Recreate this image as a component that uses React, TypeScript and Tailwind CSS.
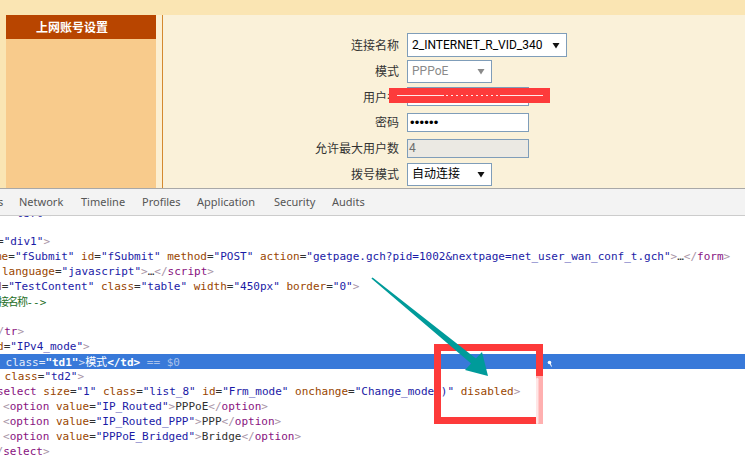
import React from "react";

type Seg = [string, string];

const P = "text-[#a894a6]";
const T = "text-[#881280]";
const A = "text-[#994500]";
const V = "text-[#1a1aa6]";
const E = "text-[#303030]";
const C = "text-[#236e25]";
const CJK = "text-[11px] tracking-[-1.5px] font-['Noto_Sans_CJK_SC',sans-serif]";

type Line = { ml: string; segs: Seg[]; hl?: boolean; first?: boolean; h?: string };

const lines: Line[] = [
  { ml: "ml-[3px]", segs: [["=", E], ['"left"', V], [">", P]], first: true },
  { ml: "ml-[0px]", segs: [], h: "h-[13px]" },
  { ml: "ml-[-3px]", segs: [["=", E], ['"div1"', V], [">", P]] },
  {
    ml: "ml-[-5px]",
    segs: [
      ["me", A], ["=", E], ['"fSubmit"', V], [" id", A], ["=", E], ['"fSubmit"', V],
      [" method", A], ["=", E], ['"POST"', V], [" action", A], ["=", E],
      ['"getpage.gch?pid=1002&nextpage=net_user_wan_conf_t.gch"', V], [">", P], ["…", E], ["</", P], ["form", T], [">", P],
    ],
  },
  {
    ml: "ml-[2px]",
    segs: [["language", A], ["=", E], ['"javascript"', V], [">", P], ["…", E], ["</", P], ["script", T], [">", P]],
  },
  {
    ml: "ml-[-5px]",
    segs: [
      ["d", A], ["=", E], ['"TestContent"', V], [" class", A], ["=", E], ['"table"', V],
      [" width", A], ["=", E], ['"450px"', V], [" border", A], ["=", E], ['"0"', V], [">", P],
    ],
  },
  { ml: "ml-[-2px]", segs: [["接名称", C + " " + CJK], ["-->", C]] },
  { ml: "ml-[0px]", segs: [] },
  { ml: "ml-[-9px]", segs: [["</", P], ["tr", T], [">", P]] },
  { ml: "ml-[-3px]", segs: [["d", A], ["=", E], ['"IPv4_mode"', V], [">", P]] },
  {
    ml: "ml-[-1px]",
    hl: true,
    segs: [
      [" class", "text-[#e4ecf9]"], ["=", "text-[#e4ecf9]"], ['"td1"', "text-white font-bold"], [">", "text-[#d3def4]"],
      ["模式", "text-white text-[11px] font-['Noto_Sans_CJK_SC',sans-serif]"], ["</td>", "text-white font-bold"], [" == $0", "text-[#a9c1ea]"],
    ],
  },
  { ml: "ml-[-2px]", segs: [[" class", A], ["=", E], ['"td2"', V], [">", P]] },
  {
    ml: "ml-[-3px]",
    segs: [
      ["select", T], [" size", A], ["=", E], ['"1"', V], [" class", A], ["=", E], ['"list_8"', V],
      [" id", A], ["=", E], ['"Frm_mode"', V], [" onchange", A], ["=", E], ['"Change_mode()"', V], [" disabled", A], [">", P],
    ],
  },
  { ml: "ml-[3px]", segs: [["<", P], ["option", T], [" value", A], ["=", E], ['"IP_Routed"', V], [">", P], ["PPPoE", E], ["</", P], ["option", T], [">", P]] },
  { ml: "ml-[3px]", segs: [["<", P], ["option", T], [" value", A], ["=", E], ['"IP_Routed_PPP"', V], [">", P], ["PPP", E], ["</", P], ["option", T], [">", P]] },
  { ml: "ml-[3px]", segs: [["<", P], ["option", T], [" value", A], ["=", E], ['"PPPoE_Bridged"', V], [">", P], ["Bridge", E], ["</", P], ["option", T], [">", P]] },
  { ml: "ml-[-10px]", segs: [["</", P], ["select", T], [">", P]] },
];

function Arrow({ gray }: { gray?: boolean }) {
  return (
    <svg width="8" height="7" viewBox="0 0 8 7" className="shrink-0">
      <polygon points="0.5,1 7.5,1 4,6.5" fill={gray ? "#8a8a8a" : "#111111"} />
    </svg>
  );
}

const latin = "font-['Roboto','Noto_Sans_CJK_SC',sans-serif]";

function Row({ label, h, children }: { label: string; h: string; children: React.ReactNode }) {
  return (
    <div className={`flex items-center ${h}`}>
      <div className="w-[236px] shrink-0 text-right text-[12px] text-[#333333] font-['Noto_Sans_CJK_SC',sans-serif]">{label}</div>
      <div className="ml-[8px] flex items-center">{children}</div>
    </div>
  );
}

export default function App() {
  const tabs: [string, string][] = [
    ["s", "w-[21px] ml-[-2px]"],
    ["Network", "w-[62px]"],
    ["Timeline", "w-[61px]"],
    ["Profiles", "w-[55px]"],
    ["Application", "w-[77px]"],
    ["Security", "w-[58px]"],
    ["Audits", "w-[50px]"],
  ];
  return (
    <div className="relative w-[745px] h-[461px] overflow-hidden bg-white">
      <div className="h-[188px] bg-[#fae5b3] flex flex-col">
        <div className="h-[15px] shrink-0" />
        <div className="flex flex-1 min-h-0">
          <div className="w-[6px] shrink-0" />
          <div className="w-[150px] shrink-0 bg-[#f8cb8c]">
            <div className="h-[24px] bg-[#b84500] text-white font-bold text-[12px] leading-[24px] pl-[30px] font-['Noto_Sans_CJK_SC',sans-serif]">
              上网账号设置
            </div>
          </div>
          <div className="w-[6px] shrink-0 bg-[#fcefd1]" />
          <div className="w-px shrink-0 bg-[#d4892f]" />
          <div className="flex-1 bg-[#faf1d9] pt-[17px] flex flex-col">
            <Row label="连接名称" h="h-[26px]">
              <div className={`w-[160px] h-[24px] bg-white border border-[#7f9db9] flex items-center justify-between pl-[4px] pr-[6px] text-[12px] text-black ${latin}`}>
                <span>2_INTERNET_R_VID_340</span>
                <Arrow />
              </div>
            </Row>
            <Row label="模式" h="h-[26px]">
              <div className={`w-[85px] h-[23px] bg-white border border-[#7f9db9] flex items-center justify-between pl-[4px] pr-[6px] text-[12px] text-[#8a8a8a] ${latin}`}>
                <span>PPPoE</span>
                <Arrow gray />
              </div>
            </Row>
            <Row label="用户名" h="h-[25px]">
              <div className="w-[122px] h-[19px] bg-white border border-[#7f9db9]" />
            </Row>
            <Row label="密码" h="h-[26px]">
              <div className="w-[122px] h-[19px] bg-white border border-[#7f9db9] flex items-center pl-[2px] text-[13px] leading-none text-black font-['Liberation_Sans',sans-serif] tracking-[0.2px]">
                ••••••
              </div>
            </Row>
            <Row label="允许最大用户数" h="h-[26px]">
              <div className={`w-[122px] h-[19px] bg-[#ebe9e3] border border-[#7f9db9] flex items-center pl-[1px] text-[12px] text-[#6d6d6d] ${latin}`}>
                4
              </div>
            </Row>
            <Row label="拨号模式" h="h-[26px]">
              <div className={`w-[85px] h-[23px] bg-white border border-[#7f9db9] flex items-center justify-between pl-[4px] pr-[6px] text-[12px] text-black ${latin}`}>
                <span>自动连接</span>
                <Arrow />
              </div>
            </Row>
          </div>
        </div>
      </div>
      <div className="h-px bg-[#a8a8a8]" />
      <div className="h-[27px] bg-[#f3f3f3] border-b border-[#cccccc] flex items-center text-[11px] text-[#555555] font-['Noto_Sans',sans-serif]">
        {tabs.map(([t, w]) => (
          <div key={t} className={`shrink-0 ${w}`}>
            {t}
          </div>
        ))}
      </div>
      <div className="h-[245px] overflow-hidden font-['DejaVu_Sans_Mono','Noto_Sans_CJK_SC',monospace] text-[11px]">
        {lines.map((l, i) => (
          <div
            key={i}
            className={`${l.h ?? "h-[15px]"} leading-[15px] whitespace-pre ${l.hl ? "bg-[#3879d9]" : ""} ${l.first ? "mt-[-10px]" : ""}`}
          >
            <span className={`inline-block ${l.ml}`}>
              {l.segs.map(([s, c], j) => (
                <span key={j} className={c}>
                  {s}
                </span>
              ))}
            </span>
          </div>
        ))}
      </div>
      <svg className="absolute left-0 top-0 pointer-events-none" width="745" height="461" viewBox="0 0 745 461">
        <rect x="389" y="88" width="161" height="15" fill="#fd3b3b" />
        <line x1="397" y1="95.5" x2="444" y2="95.5" stroke="#ffe8e8" strokeWidth="1" />
        <line x1="446" y1="95.5" x2="498" y2="95.5" stroke="#ffe8e8" strokeWidth="1" strokeDasharray="2 3" />
        <line x1="500" y1="95.5" x2="543" y2="95.5" stroke="#ffe8e8" strokeWidth="1" />
        <rect x="434" y="344" width="109" height="7" fill="#fd3a3a" />
        <rect x="434" y="344" width="7" height="80" fill="#fd3a3a" />
        <rect x="434" y="417" width="102" height="7" fill="#fd3a3a" />
        <rect x="536" y="344" width="7" height="32" fill="#fd3a3a" />
        <rect x="536" y="376" width="7" height="48" fill="#ffb0b0" />
        <rect x="536" y="378" width="2.5" height="46" rx="1.2" fill="#ffe6e6" />
        <polygon
          points="372.6,277.4 475.9,358.5 482,352 488,376 465,370 471.1,363.5 371.4,278.6"
          fill="#009b9a"
        />
        <circle cx="549.5" cy="362.5" r="1.8" fill="#ffffff" />
        <line x1="550" y1="363" x2="551.5" y2="366.5" stroke="#ffffff" strokeWidth="1" />
      </svg>
    </div>
  );
}
